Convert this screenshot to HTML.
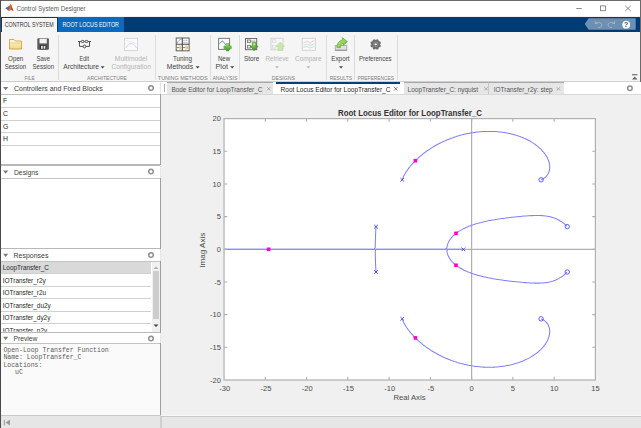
<!DOCTYPE html>
<html><head><meta charset="utf-8">
<style>
html,body{margin:0;padding:0;}
body{width:641px;height:428px;overflow:hidden;position:relative;background:#f0f0f0;font-family:"Liberation Sans",sans-serif;}
.abs{position:absolute;}
.t{position:absolute;white-space:nowrap;line-height:1;transform-origin:0 0;}
.b{position:absolute;box-sizing:border-box;}
</style></head><body>
<!-- window frame -->
<div class="b" style="left:0;top:0;width:641px;height:16px;background:#fff;"></div>
<div class="b" style="left:0;top:16.5px;width:641px;height:15.5px;background:#003c73;"></div>
<div class="b" style="left:2px;top:18px;width:55px;height:14px;background:#f5f5f5;border:1px solid #fff;border-bottom:none;"></div>
<div class="b" style="left:57.7px;top:17px;width:66px;height:14.6px;background:#0a6ac0;"></div>
<!-- toolstrip -->
<div class="b" style="left:0;top:32px;width:641px;height:49px;background:#f5f5f5;"></div>
<div class="b" style="left:0;top:81px;width:641px;height:1px;background:#cfcfcf;"></div>
<!-- separators -->
<div class="b" style="left:58px;top:35px;width:1px;height:45px;background:#dcdcdc;"></div>
<div class="b" style="left:155px;top:35px;width:1px;height:45px;background:#dcdcdc;"></div>
<div class="b" style="left:210px;top:35px;width:1px;height:45px;background:#dcdcdc;"></div>
<div class="b" style="left:239px;top:35px;width:1px;height:45px;background:#dcdcdc;"></div>
<div class="b" style="left:326px;top:35px;width:1px;height:45px;background:#dcdcdc;"></div>
<div class="b" style="left:354px;top:35px;width:1px;height:45px;background:#dcdcdc;"></div>
<div class="b" style="left:397px;top:35px;width:1px;height:45px;background:#dcdcdc;"></div>

<!-- left panel -->
<div class="b" style="left:0;top:82px;width:161px;height:333px;background:#fff;"></div>
<!-- panel 1 header -->
<div class="b" style="left:1px;top:82px;width:159px;height:12px;background:#fff;"></div>
<div class="b" style="left:1px;top:94px;width:159px;height:1px;background:#c4c4c4;"></div>
<div class="b" style="left:1px;top:107px;width:159px;height:1px;background:#d0d0d0;"></div>
<div class="b" style="left:1px;top:119.5px;width:159px;height:1px;background:#d0d0d0;"></div>
<div class="b" style="left:1px;top:132px;width:159px;height:1px;background:#d0d0d0;"></div>
<div class="b" style="left:1px;top:144.5px;width:159px;height:1px;background:#d0d0d0;"></div>
<div class="b" style="left:1px;top:164px;width:159px;height:1.5px;background:#b8b8b8;"></div>
<!-- designs -->
<div class="b" style="left:1px;top:165.5px;width:159px;height:12px;background:#fff;"></div>
<div class="b" style="left:1px;top:177.5px;width:159px;height:1px;background:#c4c4c4;"></div>
<div class="b" style="left:1px;top:248px;width:159px;height:1px;background:#b8b8b8;"></div>
<!-- responses -->
<div class="b" style="left:1px;top:249px;width:159px;height:12px;background:#fff;"></div>
<div class="b" style="left:1px;top:260.5px;width:159px;height:1px;background:#c4c4c4;"></div>
<div class="b" style="left:1px;top:261.5px;width:150px;height:11px;background:#d9d9d9;"></div>
<div class="b" style="left:1px;top:272.5px;width:150px;height:1px;background:#cfcfcf;"></div>
<div class="b" style="left:1px;top:285.5px;width:150px;height:1px;background:#d0d0d0;"></div>
<div class="b" style="left:1px;top:298px;width:150px;height:1px;background:#d0d0d0;"></div>
<div class="b" style="left:1px;top:310.5px;width:150px;height:1px;background:#d0d0d0;"></div>
<div class="b" style="left:1px;top:323px;width:150px;height:1px;background:#d0d0d0;"></div>
<!-- scrollbar -->
<div class="b" style="left:151.5px;top:261.5px;width:8.5px;height:70.5px;background:#f0f0f0;"></div>
<div class="b" style="left:152.5px;top:270.5px;width:6px;height:48px;background:#cdcdcd;"></div>
<svg class="abs" style="left:151px;top:262px" width="10" height="70">
<path d="M2.5 7 L5 4.5 L7.5 7 Z" fill="#b0b0b0"/>
<path d="M2.5 62.5 L5 65 L7.5 62.5 Z" fill="#404040"/>
</svg>
<!-- preview -->
<div class="b" style="left:1px;top:332px;width:159px;height:1px;background:#b8b8b8;"></div>
<div class="b" style="left:1px;top:333px;width:159px;height:10px;background:#fff;"></div>
<div class="b" style="left:1px;top:343px;width:159px;height:1px;background:#c4c4c4;"></div>
<div class="b" style="left:1px;top:344px;width:159px;height:71px;background:#fafafa;"></div>
<!-- panel right border -->
<div class="b" style="left:160px;top:94px;width:1px;height:71px;background:#a0a0a0;"></div>
<div class="b" style="left:160px;top:177.5px;width:1px;height:71px;background:#a0a0a0;"></div>
<div class="b" style="left:160px;top:260.5px;width:1px;height:72px;background:#a0a0a0;"></div>
<div class="b" style="left:160px;top:343px;width:1px;height:72px;background:#a0a0a0;"></div>
<div class="b" style="left:160px;top:82px;width:1.5px;height:12px;background:#e6e6e6;"></div>
<div class="b" style="left:160px;top:165.5px;width:1.5px;height:12px;background:#e6e6e6;"></div>
<div class="b" style="left:160px;top:249px;width:1.5px;height:11.5px;background:#e6e6e6;"></div>
<div class="b" style="left:160px;top:333px;width:1.5px;height:10px;background:#e6e6e6;"></div>
<!-- panel header triangles + gear -->
<svg class="abs" style="left:0;top:0" width="161" height="428">
<g fill="#7a7a7a">
<path d="M3.1 87 H8.2 L5.65 90.2 Z"/>
<path d="M3.1 170.5 H8.2 L5.65 173.7 Z"/>
<path d="M3.1 253.8 H8.2 L5.65 257 Z"/>
<path d="M3.1 336.8 H8.2 L5.65 340 Z"/>
</g>
<g fill="none" stroke="#8f8f8f" stroke-width="1.5">
<circle cx="151" cy="88" r="2.25"/>
<circle cx="151" cy="171.5" r="2.25"/>
<circle cx="151" cy="255" r="2.25"/>
<circle cx="151" cy="338.5" r="2.25"/>
</g>
</svg>

<!-- document area -->
<div class="b" style="left:161px;top:82px;width:480px;height:12px;background:#fff;"></div>
<div class="b" style="left:161px;top:94px;width:480px;height:321px;background:#f0f0f0;"></div>
<div class="b" style="left:161px;top:93.5px;width:480px;height:1px;background:#d8d8d8;"></div>
<!-- grip -->
<div class="b" style="left:163.5px;top:84px;width:1px;height:8px;background:#b0b0b0;"></div>
<!-- tabs -->
<div class="b" style="left:166.5px;top:82px;width:106.5px;height:12px;background:#e6e6e6;border-top:1px solid #a8a8a8;"></div>
<div class="b" style="left:276px;top:82px;width:124px;height:12px;background:#fff;border-top:2px solid #0a3e76;"></div>
<div class="b" style="left:403.5px;top:82px;width:85px;height:12px;background:#e6e6e6;border-top:1px solid #a8a8a8;border-right:1px solid #c8c8c8;"></div>
<div class="b" style="left:488.5px;top:82px;width:75px;height:12px;background:#e6e6e6;border-top:1px solid #a8a8a8;"></div>
<svg class="abs" style="left:0;top:80px" width="641" height="16">
<g stroke="#9a9a9a" stroke-width="0.8">
<path d="M267.2 7.2 l3.2 3.2 M267.2 10.4 l3.2 -3.2"/>
<path d="M484.4 7.2 l3.2 3.2 M484.4 10.4 l3.2 -3.2"/>
<path d="M556.8 7.2 l3.2 3.2 M556.8 10.4 l3.2 -3.2"/>
</g>
<g stroke="#555" stroke-width="0.8">
<path d="M394.2 7.2 l3.2 3.2 M394.2 10.4 l3.2 -3.2"/>
</g>
<circle cx="629.9" cy="8.2" r="2.25" fill="none" stroke="#8f8f8f" stroke-width="1.5"/>
</svg>

<!-- status bar -->
<div class="b" style="left:0;top:415px;width:641px;height:13px;background:#e6e6e6;border-top:1px solid #c8c8c8;"></div>
<div class="b" style="left:161px;top:415px;width:480px;height:1px;background:#f7f7f7;"></div>
<div class="b" style="left:161px;top:416px;width:480px;height:1px;background:#c8c8c8;"></div>
<div class="b" style="left:160px;top:416px;width:1.5px;height:12px;background:#cfcfcf;"></div>
<svg class="abs" style="left:0;top:415px" width="20" height="13">
<path d="M4.3 4.8 V10.5" stroke="#9a9a9a" stroke-width="1"/>
<path d="M10 4.8 L5.5 7.6 L10 10.5 Z" fill="#9a9a9a"/>
</svg>

<!-- frame lines -->
<div class="b" style="left:0;top:0;width:641px;height:1px;background:#6a6a6a;"></div>
<div class="b" style="left:0;top:0;width:1px;height:428px;background:#4a4a4a;"></div>
<div class="b" style="left:640px;top:0;width:1px;height:82px;background:#6a6a6a;"></div>

<!-- window controls -->
<svg class="abs" style="left:0;top:0" width="641" height="16">
<path d="M576.2 8.5 H581.8" stroke="#707070" stroke-width="0.8"/>
<rect x="600.6" y="5.9" width="5" height="4.8" fill="none" stroke="#707070" stroke-width="0.8"/>
<path d="M625.2 5.8 L630.8 11 M625.2 11 L630.8 5.8" stroke="#707070" stroke-width="0.8"/>
<!-- matlab logo -->
<path d="M5.5 8.2 L8.6 6.2 L10.8 3.9 L13.4 10.9 L11.2 9.6 L9 11.2 Z" fill="#e8662a"/>
<path d="M5.5 8.2 L8.6 6.2 L9.6 8.2 L7.6 9.7 Z" fill="#3b6fb6"/>
<path d="M10.8 3.9 L13.4 10.9 L11.6 9.8 Z" fill="#a8351a"/>
</svg>

<!-- QAT -->
<svg class="abs" style="left:580px;top:16px" width="61" height="16">
<path d="M4.8 8 L8.6 2.3 H55.7 V13.7 H8.6 Z" fill="#6c8fb3"/>
<g fill="none" stroke="#a3b8cf" stroke-width="0.9">
<path d="M15.2 5.2 V7.6 H17.6"/><path d="M15.4 7.4 C17 5.9 21.8 5.9 21.8 8.9 C21.8 11 19.6 11.9 17.8 11.4"/>
<path d="M34.6 5.2 V7.6 H32.2"/><path d="M34.4 7.4 C32.8 5.9 28 5.9 28 8.9 C28 11 30.2 11.9 32 11.4"/>
</g>
<circle cx="46.2" cy="8.7" r="3.9" fill="#fff"/>
<text x="46.2" y="11.2" font-family="Liberation Sans" font-weight="700" font-size="6.8" text-anchor="middle" fill="#2a4a70">?</text>
</svg>

<!-- toolstrip icons -->
<svg class="abs" style="left:0;top:0" width="641" height="82">
<defs>
<linearGradient id="fold" x1="0" y1="0" x2="0" y2="1"><stop offset="0" stop-color="#fffbe6"/><stop offset="1" stop-color="#f3d67a"/></linearGradient>
<linearGradient id="grn2" x1="0" y1="0" x2="1" y2="1"><stop offset="0" stop-color="#c4ee88"/><stop offset="0.6" stop-color="#8fd04e"/><stop offset="1" stop-color="#4c9c2a"/></linearGradient>
<linearGradient id="grn" x1="0" y1="0" x2="0" y2="1"><stop offset="0" stop-color="#a6dd6a"/><stop offset="1" stop-color="#2f9a1e"/></linearGradient>
</defs>
<!-- folder -->
<path d="M9.5 39.5 H14 L15.5 41 H21.5 V49 H9.5 Z" fill="url(#fold)" stroke="#d0a24a" stroke-width="0.9"/>
<path d="M10 43 H21.5" stroke="#e8c772" stroke-width="0.8"/>
<!-- floppy -->
<rect x="37.3" y="38.3" width="11.6" height="11.4" rx="0.8" fill="#5a5a5a"/>
<rect x="39.5" y="38.8" width="7.3" height="4.6" fill="#f4f4f4"/>
<rect x="39.8" y="45" width="6.6" height="4.4" fill="#2e2e2e"/>
<rect x="41" y="45.8" width="1.8" height="3" fill="#e0e0e0"/><rect x="43.6" y="45.8" width="1.8" height="3" fill="#e0e0e0"/>
<!-- edit architecture -->
<g stroke="#505050" stroke-width="1" fill="none">
<path d="M78 41.5 H91"/>
<path d="M79.5 41.5 V46.4 H89.5 V41.5"/>
<ellipse cx="82.7" cy="41.5" rx="1.5" ry="1.1" fill="#f5f5f5"/>
<ellipse cx="86.5" cy="41.5" rx="1.5" ry="1.1" fill="#f5f5f5"/>
<circle cx="84.5" cy="46.5" r="1.4" fill="#f5f5f5"/>
</g>
<!-- multimodel (disabled) -->
<rect x="124.5" y="38.3" width="13" height="12.2" fill="#fafafa" stroke="#d6d6d6" stroke-width="1"/>
<path d="M126 48 C129 42 133 42 136.5 48" stroke="#c7d6ea" stroke-width="0.9" fill="none"/>
<path d="M126 40 L136.5 44" stroke="#dde6f0" stroke-width="0.7" fill="none"/>
<!-- tuning methods -->
<rect x="176.2" y="38" width="12.9" height="12.8" fill="#fdfdfd" stroke="#5c5c5c" stroke-width="1"/>
<path d="M182.3 38 V50.8 M176.2 44.3 H189.1" stroke="#4a4a4a" stroke-width="1.1"/>
<path d="M177.2 43.4 C178 40.8 179.8 39.4 181.7 39.2" stroke="#7d9cbf" stroke-width="0.9" fill="none"/>
<path d="M183.3 40.3 H188.3 M183.3 42.6 H188.3" stroke="#9fb8d3" stroke-width="1" stroke-dasharray="1.6 0.6"/>
<path d="M179.3 45 L182 47.6 L179.3 50.3 Z" fill="#e4c15a"/>
<path d="M185.6 45 L188.8 47.6 L185.6 50.3 Z" fill="#e2bd52"/>
<path d="M180 45.2 V50.2 M186.3 45.2 V50.2" stroke="#efd88f" stroke-width="0.8"/>
<path d="M177 47.6 H179.2 M183 47.6 H185.3" stroke="#5a86c0" stroke-width="1"/>
<!-- new plot -->
<rect x="218.6" y="38.4" width="11" height="11" fill="#fcfcfc" stroke="#7a7a7a" stroke-width="1"/>
<path d="M219.3 43.6 L222.6 40.9 L226 45" stroke="#6f93bd" stroke-width="1" fill="none"/>
<path d="M226.25 43.599999999999994 H228.95 V45.949999999999996 H231.29999999999998 V48.65 H228.95 V51.0 H226.25 V48.65 H223.9 V45.949999999999996 H226.25 Z" fill="url(#grn)" stroke="#57a232" stroke-width="0.5"/>
<!-- store -->
<rect x="245.5" y="38.5" width="11.2" height="11.2" fill="#f4f4f4" stroke="#6e6e6e" stroke-width="1"/>
<rect x="247.4" y="40" width="3.2" height="2.4" fill="none" stroke="#6a6a6a" stroke-width="0.8"/>
<rect x="247.4" y="45.6" width="3.2" height="2.4" fill="none" stroke="#6a6a6a" stroke-width="0.8"/>
<path d="M250.6 41.2 H255.5" stroke="#8a8a8a" stroke-width="0.7"/>
<path d="M252.3 42.6 H256 V46.2 H258 L254.15 50.6 L250.3 46.2 H252.3 Z" fill="url(#grn)" stroke="#2f7f1f" stroke-width="0.6"/>
<ellipse cx="254.1" cy="44.2" rx="1.2" ry="1" fill="#c9f0a0" opacity="0.8"/>
<!-- retrieve (disabled) -->
<rect x="271" y="38.3" width="12" height="11.5" fill="#f7f7f7" stroke="#cfcfcf" stroke-width="0.9"/>
<rect x="272.5" y="39.8" width="3.4" height="2.6" fill="none" stroke="#d6d6d6" stroke-width="0.7"/>
<rect x="272.5" y="45.5" width="3.4" height="2.6" fill="none" stroke="#d6d6d6" stroke-width="0.7"/>
<path d="M278 50.5 V46.5 H276 L280.2 42 L284.5 46.5 H282.5 V50.5 Z" fill="#c8e8b0" stroke="#b6d9a0" stroke-width="0.6"/>
<!-- compare (disabled) -->
<rect x="302.3" y="38.3" width="13" height="12" fill="#f9f9f9" stroke="#d2d2d2" stroke-width="1"/>
<path d="M303.5 43 L307 41 L310 43 L314 40.5" stroke="#f0b8b8" stroke-width="0.8" fill="none"/>
<path d="M303.5 45.5 L307 44 L310 45.5 L314 44" stroke="#c2dcb2" stroke-width="0.8" fill="none"/>
<path d="M303.5 47.5 L307 46.5 L310 48 L314 46.5" stroke="#bcd0ea" stroke-width="0.8" fill="none"/>
<!-- export -->
<rect x="335.2" y="45.6" width="11.6" height="4.7" fill="#e2e2e2" stroke="#a2a2a2" stroke-width="0.8"/>
<path d="M335.2 50.2 H346.8" stroke="#8a8a8a" stroke-width="0.9"/>
<path d="M336.9 47.6 C337.1 43.4 338.9 40.7 342.4 40.1 L342.2 37.5 L347.4 41.6 L343.2 45.4 L342.9 43.1 C341.4 43.5 340.6 45 340.6 47.6 Z" fill="url(#grn2)" stroke="#4f9d2d" stroke-width="0.6"/>
<!-- gear -->
<g transform="translate(375.7 44.3)" fill="#6e6e6e">
<circle cx="3.60" cy="1.49" r="1.55"/><circle cx="1.49" cy="3.60" r="1.55"/><circle cx="-1.49" cy="3.60" r="1.55"/><circle cx="-3.60" cy="1.49" r="1.55"/><circle cx="-3.60" cy="-1.49" r="1.55"/><circle cx="-1.49" cy="-3.60" r="1.55"/><circle cx="1.49" cy="-3.60" r="1.55"/><circle cx="3.60" cy="-1.49" r="1.55"/>
<circle r="4.2"/>
<circle r="2.7" fill="#8c8c8c"/><circle r="1.7" fill="#5e5e5e"/><circle r="1.15" fill="#f7f7f7"/>
</g>
<!-- dropdown arrows -->
<g fill="#444">
<path d="M100.6 66.2 H104.6 L102.6 68.4 Z"/>
<path d="M195.6 66.2 H199.6 L197.6 68.4 Z"/>
<path d="M230.2 66.2 H234.2 L232.2 68.4 Z"/>
<path d="M339 66.2 H343 L341 68.4 Z"/>
</g>
<g fill="#b8b8b8">
<path d="M275 66.2 H279 L277 68.4 Z"/>
<path d="M306.3 66.2 H310.3 L308.3 68.4 Z"/>
</g>
<!-- collapse -->
<rect x="632" y="74.2" width="5.5" height="1.1" fill="#666"/>
<path d="M632 79.6 L634.75 76.5 L637.5 79.6 Z" fill="#666"/>
</svg>

<svg class="abs" style="left:0;top:0" width="641" height="428" viewBox="0 0 641 428">
<defs><clipPath id="ax"><rect x="224.05" y="118.6" width="371.34" height="261.40"/></clipPath></defs>
<rect x="224.05" y="118.6" width="371.34" height="261.40" fill="#fff"/>
<g clip-path="url(#ax)">
<path d="M471.61 118.6 V380.6 M224.05 249.30 H596.05" stroke="#b0b0b0" stroke-width="1.2" fill="none"/>
<g fill="none" stroke="#8080ff" stroke-width="1.05" stroke-linejoin="round">
<path d="M402.2 179.8 L402.5 178.9 L402.9 178.0 L403.3 177.0 L403.7 176.1 L404.2 175.2 L404.7 174.3 L405.2 173.5 L405.7 172.6 L406.2 171.8 L406.8 170.9 L407.4 170.1 L408.0 169.2 L408.6 168.4 L409.2 167.6 L409.9 166.8 L410.5 166.0 L411.2 165.2 L411.8 164.5 L412.5 163.7 L413.2 163.0 L413.9 162.2 L414.6 161.5 L415.3 160.7 L416.1 160.0 L416.8 159.3 L417.6 158.6 L418.3 157.9 L419.1 157.2 L419.9 156.5 L420.7 155.9 L421.4 155.2 L422.3 154.6 L423.0 153.9 L423.8 153.3 L424.7 152.7 L425.5 152.0 L426.3 151.4 L427.2 150.8 L428.0 150.3 L428.9 149.7 L429.8 149.1 L430.6 148.5 L431.5 147.9 L432.4 147.4 L433.3 146.8 L434.2 146.3 L435.1 145.8 L436.0 145.3 L436.9 144.8 L437.8 144.3 L438.7 143.8 L439.7 143.3 L440.7 142.8 L441.6 142.4 L442.5 141.9 L443.4 141.5 L444.4 141.1 L445.3 140.6 L446.3 140.2 L447.3 139.8 L448.3 139.4 L449.3 139.0 L450.3 138.6 L451.2 138.2 L452.2 137.9 L453.2 137.5 L454.1 137.2 L455.1 136.9 L456.1 136.6 L457.1 136.2 L458.1 135.9 L459.2 135.6 L460.2 135.3 L461.3 135.0 L462.3 134.8 L463.4 134.5 L464.5 134.2 L465.4 134.0 L466.4 133.8 L467.4 133.6 L468.4 133.4 L469.4 133.2 L470.4 133.0 L471.5 132.8 L472.5 132.7 L473.5 132.5 L474.5 132.4 L475.6 132.2 L476.6 132.1 L477.7 132.0 L478.7 131.9 L479.8 131.8 L480.9 131.7 L481.9 131.6 L483.0 131.5 L484.1 131.5 L485.2 131.4 L486.3 131.4 L487.3 131.4 L488.4 131.4 L489.5 131.4 L490.6 131.4 L491.7 131.4 L492.8 131.4 L493.9 131.5 L495.0 131.5 L496.1 131.6 L497.2 131.7 L498.3 131.8 L499.3 131.9 L500.4 132.0 L501.5 132.1 L502.6 132.3 L503.7 132.4 L504.8 132.6 L505.8 132.8 L506.9 133.0 L508.0 133.2 L509.0 133.4 L510.1 133.6 L511.1 133.9 L512.1 134.1 L513.2 134.4 L514.2 134.7 L515.2 135.0 L516.2 135.3 L517.2 135.6 L518.2 135.9 L519.2 136.3 L520.2 136.6 L521.1 137.0 L522.1 137.3 L523.0 137.7 L523.9 138.1 L524.9 138.6 L525.9 139.0 L526.9 139.5 L527.9 140.0 L528.8 140.5 L529.8 141.0 L530.7 141.5 L531.6 142.1 L532.4 142.6 L533.3 143.1 L534.1 143.7 L535.0 144.3 L535.9 145.0 L536.8 145.6 L537.6 146.3 L538.4 146.9 L539.1 147.6 L539.9 148.3 L540.7 149.0 L541.4 149.7 L542.1 150.5 L542.8 151.3 L543.5 152.0 L544.1 152.9 L544.8 153.7 L545.3 154.5 L545.9 155.4 L546.5 156.3 L547.0 157.2 L547.5 158.1 L547.9 159.1 L548.3 160.0 L548.7 161.0 L549.0 162.0 L549.2 163.0 L549.5 163.9 L549.6 165.0 L549.7 166.0 L549.8 167.0 L549.7 168.0 L549.6 169.0 L549.5 170.0 L549.2 171.0 L548.9 172.0 L548.5 172.9 L548.1 173.8 L547.5 174.7 L546.9 175.5 L546.3 176.3 L545.6 177.0 L544.8 177.7 L544.0 178.3 L543.1 178.8 L542.2 179.3 L541.3 179.7 L541.2 179.8"/>
<path d="M402.2 318.8 L402.5 319.7 L402.9 320.6 L403.3 321.6 L403.7 322.5 L404.2 323.4 L404.7 324.3 L405.2 325.1 L405.7 326.0 L406.2 326.8 L406.8 327.7 L407.4 328.5 L408.0 329.4 L408.6 330.2 L409.2 331.0 L409.9 331.8 L410.5 332.6 L411.2 333.4 L411.8 334.1 L412.5 334.9 L413.2 335.6 L413.9 336.4 L414.6 337.1 L415.3 337.9 L416.1 338.6 L416.8 339.3 L417.6 340.0 L418.3 340.7 L419.1 341.4 L419.9 342.1 L420.7 342.7 L421.4 343.4 L422.3 344.0 L423.0 344.7 L423.8 345.3 L424.7 345.9 L425.5 346.6 L426.3 347.2 L427.2 347.8 L428.0 348.3 L428.9 348.9 L429.8 349.5 L430.6 350.1 L431.5 350.7 L432.4 351.2 L433.3 351.8 L434.2 352.3 L435.1 352.8 L436.0 353.3 L436.9 353.8 L437.8 354.3 L438.7 354.8 L439.7 355.3 L440.7 355.8 L441.6 356.2 L442.5 356.7 L443.4 357.1 L444.4 357.5 L445.3 358.0 L446.3 358.4 L447.3 358.8 L448.3 359.2 L449.3 359.6 L450.3 360.0 L451.2 360.4 L452.2 360.7 L453.2 361.1 L454.1 361.4 L455.1 361.7 L456.1 362.0 L457.1 362.4 L458.1 362.7 L459.2 363.0 L460.2 363.3 L461.3 363.6 L462.3 363.8 L463.4 364.1 L464.5 364.4 L465.4 364.6 L466.4 364.8 L467.4 365.0 L468.4 365.2 L469.4 365.4 L470.4 365.6 L471.5 365.8 L472.5 365.9 L473.5 366.1 L474.5 366.2 L475.6 366.4 L476.6 366.5 L477.7 366.6 L478.7 366.7 L479.8 366.8 L480.9 366.9 L481.9 367.0 L483.0 367.1 L484.1 367.1 L485.2 367.2 L486.3 367.2 L487.3 367.2 L488.4 367.2 L489.5 367.2 L490.6 367.2 L491.7 367.2 L492.8 367.2 L493.9 367.1 L495.0 367.1 L496.1 367.0 L497.2 366.9 L498.3 366.8 L499.3 366.7 L500.4 366.6 L501.5 366.5 L502.6 366.3 L503.7 366.2 L504.8 366.0 L505.8 365.8 L506.9 365.6 L508.0 365.4 L509.0 365.2 L510.1 365.0 L511.1 364.7 L512.1 364.5 L513.2 364.2 L514.2 363.9 L515.2 363.6 L516.2 363.3 L517.2 363.0 L518.2 362.7 L519.2 362.3 L520.2 362.0 L521.1 361.6 L522.1 361.3 L523.0 360.9 L523.9 360.5 L524.9 360.0 L525.9 359.6 L526.9 359.1 L527.9 358.6 L528.8 358.1 L529.8 357.6 L530.7 357.1 L531.6 356.5 L532.4 356.0 L533.3 355.5 L534.1 354.9 L535.0 354.3 L535.9 353.6 L536.8 353.0 L537.6 352.3 L538.4 351.7 L539.1 351.0 L539.9 350.3 L540.7 349.6 L541.4 348.9 L542.1 348.1 L542.8 347.3 L543.5 346.6 L544.1 345.7 L544.8 344.9 L545.3 344.1 L545.9 343.2 L546.5 342.3 L547.0 341.4 L547.5 340.5 L547.9 339.5 L548.3 338.6 L548.7 337.6 L549.0 336.6 L549.2 335.6 L549.5 334.7 L549.6 333.6 L549.7 332.6 L549.8 331.6 L549.7 330.6 L549.6 329.6 L549.5 328.6 L549.2 327.6 L548.9 326.6 L548.5 325.7 L548.1 324.8 L547.5 323.9 L546.9 323.1 L546.3 322.3 L545.6 321.6 L544.8 320.9 L544.0 320.3 L543.1 319.8 L542.2 319.3 L541.3 318.9 L541.2 318.8"/>
<path d="M376.0 226.6 L376.0 227.6 L375.9 228.6 L375.8 229.6 L375.8 230.6 L375.7 231.6 L375.7 232.7 L375.6 233.7 L375.6 234.7 L375.5 235.7 L375.5 236.7 L375.5 237.7 L375.4 238.8 L375.4 239.8 L375.4 240.9 L375.3 241.9 L375.3 243.1 L375.3 244.1 L375.3 245.3 L375.3 246.3 L375.2 247.5 L374.4 249.3 L373.3 249.3 L372.1 249.3 L370.9 249.3 L369.6 249.3 L368.6 249.3 L367.5 249.3 L366.3 249.3 L365.3 249.3 L364.1 249.3 L363.0 249.3 L362.0 249.3 L361.0 249.3 L359.9 249.3 L358.9 249.3 L357.8 249.3 L356.7 249.3 L355.7 249.3 L354.7 249.3 L353.7 249.3 L352.6 249.3 L351.5 249.3 L350.4 249.3 L349.4 249.3 L348.3 249.3 L347.2 249.3 L346.2 249.3 L345.1 249.3 L344.1 249.3 L343.0 249.3 L341.9 249.3 L340.9 249.3 L339.8 249.3 L338.7 249.3 L337.7 249.3 L336.6 249.3 L335.5 249.3 L334.4 249.3 L333.3 249.3 L332.3 249.3 L331.3 249.3 L330.2 249.3 L329.2 249.3 L328.2 249.3 L327.1 249.3 L326.1 249.3 L325.0 249.3 L323.9 249.3 L322.8 249.3 L321.7 249.3 L320.6 249.3 L319.5 249.3 L318.5 249.3 L317.5 249.3 L316.5 249.3 L315.4 249.3 L314.4 249.3 L313.3 249.3 L312.3 249.3 L311.2 249.3 L310.1 249.3 L309.0 249.3 L307.9 249.3 L306.8 249.3 L305.7 249.3 L304.5 249.3 L303.5 249.3 L302.5 249.3 L301.5 249.3 L300.5 249.3 L299.4 249.3 L298.4 249.3 L297.3 249.3 L296.2 249.3 L295.1 249.3 L294.0 249.3 L292.9 249.3 L291.8 249.3 L290.7 249.3 L289.5 249.3 L288.4 249.3 L287.2 249.3 L286.2 249.3 L285.2 249.3 L284.2 249.3 L283.1 249.3 L282.1 249.3 L281.0 249.3 L280.0 249.3 L278.9 249.3 L277.8 249.3 L276.7 249.3 L275.6 249.3 L274.5 249.3 L273.4 249.3 L272.3 249.3 L271.1 249.3 L270.0 249.3 L268.8 249.3 L267.6 249.3 L266.5 249.3 L265.3 249.3 L264.3 249.3 L263.3 249.3 L262.2 249.3 L261.2 249.3 L260.2 249.3 L259.1 249.3 L258.1 249.3 L257.0 249.3 L255.9 249.3 L254.9 249.3 L253.8 249.3 L252.7 249.3 L251.6 249.3 L250.5 249.3 L249.3 249.3 L248.2 249.3 L247.1 249.3 L245.9 249.3 L244.7 249.3 L243.6 249.3 L242.4 249.3 L241.2 249.3 L240.0 249.3 L238.8 249.3 L237.6 249.3 L236.3 249.3 L235.1 249.3 L234.1 249.3 L233.1 249.3 L232.1 249.3 L231.0 249.3 L230.0 249.3 L229.0 249.3 L227.9 249.3 L226.9 249.3 L225.8 249.3 L224.7 249.3 L223.7 249.3 L222.6 249.3 L221.5 249.3 L220.4 249.3 L219.3 249.3 L218.2 249.3 L217.1 249.3 L215.9 249.3 L214.8 249.3 L213.7 249.3 L212.5 249.3 L211.3 249.3 L210.2 249.3 L209.0 249.3 L207.8 249.3 L206.6 249.3 L205.4 249.3 L204.2 249.3 L203.0 249.3 L201.7 249.3 L200.5 249.3 L199.2 249.3 L198.0 249.3 L196.7 249.3 L195.4 249.3 L194.1 249.3 L192.8 249.3 L191.5 249.3 L190.2 249.3 L188.9 249.3 L187.9 249.3 L186.9 249.3 L185.8 249.3 L184.8 249.3 L183.8 249.3 L182.8 249.3 L181.7 249.3 L180.7 249.3 L179.6 249.3 L178.6 249.3 L177.5 249.3 L176.4 249.3 L175.4 249.3 L174.3 249.3 L173.2 249.3 L172.1 249.3 L171.0 249.3 L169.9 249.3 L168.8 249.3 L167.6 249.3 L166.5 249.3 L165.4 249.3 L164.2 249.3 L163.1 249.3 L161.9 249.3 L160.8 249.3 L159.6 249.3 L158.4 249.3 L157.2 249.3 L156.0 249.3 L154.8 249.3 L153.6 249.3 L152.4 249.3 L151.2 249.3 L150.0 249.3 L148.7 249.3 L147.5 249.3 L146.2 249.3 L145.0 249.3 L143.7 249.3 L142.4 249.3 L141.1 249.3 L139.8 249.3 L138.5 249.3 L137.2 249.3 L135.9 249.3 L134.6 249.3 L133.2 249.3 L131.9 249.3 L130.6 249.3 L129.2 249.3 L127.8 249.3 L126.4 249.3 L125.1 249.3 L123.7 249.3 L122.3 249.3 L120.8 249.3 L119.4 249.3 L118.0 249.3 L116.5 249.3 L115.1 249.3 L113.6 249.3 L112.2 249.3 L110.7 249.3 L109.2 249.3 L107.7 249.3 L106.7 249.3 L105.7 249.3 L104.7 249.3 L103.6 249.3 L102.6 249.3 L101.6 249.3 L100.6 249.3 L99.5 249.3 L98.5 249.3 L97.4 249.3 L96.4 249.3 L95.3 249.3 L94.3 249.3 L93.2 249.3 L92.1 249.3 L91.1 249.3 L90.0 249.3 L88.9 249.3 L87.8 249.3 L86.7 249.3 L85.6 249.3 L84.5 249.3 L83.4 249.3 L82.3 249.3 L81.1 249.3 L80.0 249.3 L78.9 249.3 L77.8 249.3 L76.6 249.3 L75.5 249.3 L74.3 249.3 L73.2 249.3 L72.0 249.3 L70.8 249.3 L69.7 249.3 L68.5 249.3 L67.3 249.3 L66.1 249.3 L64.9 249.3 L63.7 249.3 L62.5 249.3 L61.3 249.3 L60.1 249.3 L58.8 249.3 L57.6 249.3 L56.4 249.3 L55.1 249.3 L53.9 249.3 L52.6 249.3 L51.4 249.3 L50.1 249.3 L48.8 249.3 L47.6 249.3 L46.3 249.3 L45.0 249.3 L43.7 249.3 L42.4 249.3 L41.1 249.3 L39.8 249.3 L38.5 249.3 L37.1 249.3 L35.8 249.3 L34.5 249.3 L33.1 249.3 L31.8 249.3 L30.4 249.3 L29.0 249.3 L27.7 249.3 L26.3 249.3 L24.9 249.3 L23.5 249.3 L22.1 249.3 L20.7 249.3 L19.3 249.3 L17.9 249.3 L16.4 249.3 L15.0 249.3 L13.6 249.3 L12.1 249.3 L10.7 249.3 L9.2 249.3 L7.7 249.3 L6.2 249.3 L4.8 249.3 L3.3 249.3 L1.8 249.3 L0.3 249.3 L-1.3 249.3 L-2.8 249.3 L-4.3 249.3 L-5.8 249.3 L-7.4 249.3 L-8.9 249.3 L-10.5 249.3 L-12.1 249.3 L-13.7 249.3 L-15.2 249.3 L-16.8 249.3 L-18.4 249.3 L-20.0 249.3 L-21.7 249.3 L-23.3 249.3 L-24.9 249.3 L-26.6 249.3 L-28.2 249.3 L-29.9 249.3 L-31.5 249.3 L-33.2 249.3 L-34.9 249.3 L-36.6 249.3 L-38.3 249.3 L-40.0 249.3 L-41.7 249.3 L-43.5 249.3 L-45.2 249.3 L-47.0 249.3 L-48.7 249.3 L-50.5 249.3 L-52.3 249.3 L-54.0 249.3 L-55.8 249.3 L-57.6 249.3 L-59.5 249.3 L-61.3 249.3 L-63.1 249.3 L-65.0 249.3 L-66.8 249.3 L-68.7 249.3 L-70.5 249.3 L-72.4 249.3 L-74.3 249.3 L-76.2 249.3 L-78.1 249.3 L-80.1 249.3 L-82.0 249.3 L-83.9 249.3 L-85.9 249.3 L-87.9 249.3 L-89.8 249.3 L-91.8 249.3 L-93.8 249.3 L-94.8 249.3 L-95.8 249.3 L-96.8 249.3 L-97.8 249.3 L-98.8 249.3 L-99.9 249.3 L-100.9 249.3 L-101.9 249.3 L-102.9 249.3 L-104.0 249.3 L-105.0 249.3 L-106.0 249.3 L-107.1 249.3 L-108.1 249.3 L-109.1 249.3 L-110.2 249.3 L-111.2 249.3 L-112.3 249.3 L-113.3 249.3 L-114.4 249.3 L-115.4 249.3 L-116.5 249.3 L-117.6 249.3 L-118.6 249.3 L-119.7 249.3 L-120.8 249.3 L-121.8 249.3 L-122.9 249.3 L-124.0 249.3 L-125.1 249.3 L-126.2 249.3 L-127.3 249.3 L-128.4 249.3 L-129.5 249.3 L-130.6 249.3 L-131.7 249.3 L-132.8 249.3 L-133.9 249.3 L-135.0 249.3 L-136.1 249.3 L-137.2 249.3 L-138.3 249.3 L-139.5 249.3 L-140.6 249.3 L-141.7 249.3 L-142.9 249.3 L-144.0 249.3 L-145.1 249.3 L-146.3 249.3 L-147.4 249.3 L-148.6 249.3 L-149.7 249.3 L-150.9 249.3 L-152.1 249.3 L-153.2 249.3 L-154.4 249.3 L-155.5 249.3 L-156.7 249.3 L-157.9 249.3 L-159.1 249.3 L-160.3 249.3 L-161.4 249.3 L-162.6 249.3 L-163.8 249.3 L-165.0 249.3 L-166.2 249.3 L-167.4 249.3 L-168.6 249.3 L-169.8 249.3 L-171.1 249.3 L-172.3 249.3 L-173.5 249.3 L-174.7 249.3 L-175.9 249.3 L-177.2 249.3 L-178.4 249.3 L-179.6 249.3 L-180.9 249.3 L-182.1 249.3 L-183.4 249.3 L-184.6 249.3 L-185.9 249.3 L-187.1 249.3 L-188.4 249.3 L-189.7 249.3 L-190.9 249.3 L-192.2 249.3 L-193.5 249.3 L-194.8 249.3 L-196.1 249.3 L-197.3 249.3 L-198.6 249.3 L-199.9 249.3"/>
<path d="M376.0 272.0 L376.0 271.0 L375.9 270.0 L375.8 269.0 L375.8 268.0 L375.7 267.0 L375.7 265.9 L375.6 264.9 L375.6 263.9 L375.5 262.9 L375.5 261.9 L375.5 260.9 L375.4 259.8 L375.4 258.8 L375.4 257.7 L375.3 256.7 L375.3 255.5 L375.3 254.5 L375.3 253.3 L375.3 252.3 L375.2 251.1 L376.1 249.3 L377.2 249.3 L378.4 249.3 L379.6 249.3 L380.8 249.3 L381.8 249.3 L382.9 249.3 L384.0 249.3 L385.0 249.3 L386.1 249.3 L387.2 249.3 L388.2 249.3 L389.3 249.3 L390.4 249.3 L391.4 249.3 L392.4 249.3 L393.5 249.3 L394.6 249.3 L395.6 249.3 L396.6 249.3 L397.7 249.3 L398.8 249.3 L399.9 249.3 L400.9 249.3 L402.0 249.3 L403.0 249.3 L404.0 249.3 L405.1 249.3 L406.1 249.3 L407.1 249.3 L408.2 249.3 L409.2 249.3 L410.3 249.3 L411.3 249.3 L412.3 249.3 L413.4 249.3 L414.5 249.3 L415.5 249.3 L416.6 249.3 L417.7 249.3 L418.7 249.3 L419.8 249.3 L420.8 249.3 L421.8 249.3 L422.9 249.3 L424.0 249.3 L425.1 249.3 L426.1 249.3 L427.1 249.3 L428.2 249.3 L429.3 249.3 L430.4 249.3 L431.5 249.3 L432.5 249.3 L433.6 249.3 L434.7 249.3 L435.7 249.3 L436.9 249.3 L437.9 249.3 L439.1 249.3 L440.1 249.3 L441.3 249.3 L442.3 249.3 L443.7 249.3 L445.2 249.3 L446.9 248.3 L447.0 247.1 L447.2 245.9 L447.5 244.9 L447.8 243.9 L448.2 242.9 L448.6 242.0 L449.1 241.1 L449.6 240.2 L450.2 239.4 L450.8 238.5 L451.4 237.7 L452.1 236.9 L452.8 236.2 L453.5 235.5 L454.3 234.8 L455.0 234.1 L455.8 233.5 L456.7 232.8 L457.5 232.2 L458.3 231.7 L459.2 231.1 L460.1 230.6 L461.0 230.1 L461.9 229.6 L462.8 229.1 L463.7 228.6 L464.6 228.2 L465.5 227.8 L466.4 227.3 L467.4 226.9 L468.3 226.5 L469.3 226.1 L470.3 225.8 L471.2 225.4 L472.2 225.1 L473.2 224.8 L474.2 224.4 L475.2 224.1 L476.2 223.8 L477.2 223.5 L478.1 223.2 L479.1 223.0 L480.1 222.7 L481.2 222.5 L482.2 222.2 L483.2 222.0 L484.2 221.7 L485.2 221.5 L486.2 221.3 L487.2 221.1 L488.3 220.8 L489.3 220.6 L490.3 220.5 L491.3 220.3 L492.3 220.1 L493.2 219.9 L494.2 219.7 L495.2 219.6 L496.2 219.4 L497.2 219.2 L498.2 219.1 L499.2 218.9 L500.3 218.8 L501.3 218.6 L502.3 218.5 L503.3 218.4 L504.3 218.2 L505.3 218.1 L506.4 217.9 L507.4 217.8 L508.4 217.7 L509.4 217.6 L510.5 217.4 L511.5 217.3 L512.5 217.2 L513.6 217.1 L514.6 217.0 L515.6 216.9 L516.6 216.8 L517.6 216.7 L518.6 216.6 L519.6 216.5 L520.6 216.4 L521.6 216.3 L522.7 216.2 L523.7 216.1 L524.7 216.0 L525.8 216.0 L526.8 215.9 L527.9 215.8 L528.9 215.8 L529.9 215.7 L530.9 215.6 L531.9 215.6 L532.9 215.6 L534.0 215.5 L535.0 215.5 L536.0 215.5 L537.1 215.5 L538.1 215.5 L539.2 215.5 L540.2 215.5 L541.2 215.6 L542.3 215.6 L543.3 215.7 L544.4 215.8 L545.4 215.9 L546.4 216.1 L547.4 216.2 L548.4 216.4 L549.5 216.6 L550.5 216.9 L551.4 217.1 L552.4 217.4 L553.4 217.7 L554.4 218.1 L555.3 218.4 L556.2 218.8 L557.2 219.3 L558.1 219.7 L559.0 220.2 L559.8 220.7 L560.7 221.2 L561.5 221.8 L562.4 222.3 L563.2 222.9 L564.0 223.6 L564.7 224.2 L565.5 224.9 L566.2 225.6 L566.9 226.3 L567.0 226.4"/>
<path d="M463.4 249.3 L462.4 249.3 L461.4 249.3 L460.3 249.3 L459.3 249.3 L458.3 249.3 L457.3 249.3 L456.3 249.3 L455.2 249.3 L454.2 249.3 L453.1 249.3 L452.0 249.3 L450.9 249.3 L449.7 249.3 L448.4 249.3 L446.9 250.3 L447.0 251.5 L447.2 252.7 L447.5 253.7 L447.8 254.7 L448.2 255.7 L448.6 256.6 L449.1 257.5 L449.6 258.4 L450.2 259.2 L450.8 260.1 L451.4 260.9 L452.1 261.7 L452.8 262.4 L453.5 263.1 L454.3 263.8 L455.0 264.5 L455.8 265.1 L456.7 265.8 L457.5 266.4 L458.3 266.9 L459.2 267.5 L460.1 268.0 L461.0 268.5 L461.9 269.0 L462.8 269.5 L463.7 270.0 L464.6 270.4 L465.5 270.8 L466.4 271.3 L467.4 271.7 L468.3 272.1 L469.3 272.5 L470.3 272.8 L471.2 273.2 L472.2 273.5 L473.2 273.8 L474.2 274.2 L475.2 274.5 L476.2 274.8 L477.2 275.1 L478.1 275.4 L479.1 275.6 L480.1 275.9 L481.2 276.1 L482.2 276.4 L483.2 276.6 L484.2 276.9 L485.2 277.1 L486.2 277.3 L487.2 277.5 L488.3 277.8 L489.3 278.0 L490.3 278.1 L491.3 278.3 L492.3 278.5 L493.2 278.7 L494.2 278.9 L495.2 279.0 L496.2 279.2 L497.2 279.4 L498.2 279.5 L499.2 279.7 L500.3 279.8 L501.3 280.0 L502.3 280.1 L503.3 280.2 L504.3 280.4 L505.3 280.5 L506.4 280.7 L507.4 280.8 L508.4 280.9 L509.4 281.0 L510.5 281.2 L511.5 281.3 L512.5 281.4 L513.6 281.5 L514.6 281.6 L515.6 281.7 L516.6 281.8 L517.6 281.9 L518.6 282.0 L519.6 282.1 L520.6 282.2 L521.6 282.3 L522.7 282.4 L523.7 282.5 L524.7 282.6 L525.8 282.6 L526.8 282.7 L527.9 282.8 L528.9 282.8 L529.9 282.9 L530.9 283.0 L531.9 283.0 L532.9 283.0 L534.0 283.1 L535.0 283.1 L536.0 283.1 L537.1 283.1 L538.1 283.1 L539.2 283.1 L540.2 283.1 L541.2 283.0 L542.3 283.0 L543.3 282.9 L544.4 282.8 L545.4 282.7 L546.4 282.5 L547.4 282.4 L548.4 282.2 L549.5 282.0 L550.5 281.7 L551.4 281.5 L552.4 281.2 L553.4 280.9 L554.4 280.5 L555.3 280.2 L556.2 279.8 L557.2 279.3 L558.1 278.9 L559.0 278.4 L559.8 277.9 L560.7 277.4 L561.5 276.8 L562.4 276.3 L563.2 275.7 L564.0 275.0 L564.7 274.4 L565.5 273.7 L566.2 273.0 L566.9 272.3 L567.0 272.2"/>
</g>
</g>
<path d="M265.31 118.60 v3.2 M265.31 380.00 v-3.2 M306.57 118.60 v3.2 M306.57 380.00 v-3.2 M347.83 118.60 v3.2 M347.83 380.00 v-3.2 M389.09 118.60 v3.2 M389.09 380.00 v-3.2 M430.35 118.60 v3.2 M430.35 380.00 v-3.2 M471.61 118.60 v3.2 M471.61 380.00 v-3.2 M512.87 118.60 v3.2 M512.87 380.00 v-3.2 M554.13 118.60 v3.2 M554.13 380.00 v-3.2 M224.05 347.32 h3.2 M595.39 347.32 h-3.2 M224.05 314.65 h3.2 M595.39 314.65 h-3.2 M224.05 281.98 h3.2 M595.39 281.98 h-3.2 M224.05 249.30 h3.2 M595.39 249.30 h-3.2 M224.05 216.62 h3.2 M595.39 216.62 h-3.2 M224.05 183.95 h3.2 M595.39 183.95 h-3.2 M224.05 151.27 h3.2 M595.39 151.27 h-3.2" stroke="#b0b0b0" stroke-width="1.1" fill="none"/>
<rect x="224.05" y="118.6" width="371.34" height="261.40" fill="none" stroke="#b0b0b0" stroke-width="1.2"/>
<path d="M461.6 247.5 L465.2 251.1 M461.6 251.1 L465.2 247.5 M374.2 224.8 L377.8 228.4 M374.2 228.4 L377.8 224.8 M374.2 270.2 L377.8 273.8 M374.2 273.8 L377.8 270.2 M400.4 178.0 L404.0 181.6 M400.4 181.6 L404.0 178.0 M400.4 317.0 L404.0 320.6 M400.4 320.6 L404.0 317.0" stroke="#4040ff" stroke-width="0.9" fill="none"/>
<g fill="none" stroke="#5050ff" stroke-width="0.9"><circle cx="541.1" cy="179.8" r="2.2"/>
<circle cx="541.1" cy="318.8" r="2.2"/>
<circle cx="567.2" cy="226.6" r="2.2"/>
<circle cx="567.2" cy="272.0" r="2.2"/></g>
<g fill="#ff00cc"><rect x="266.81" y="247.50" width="3.6" height="3.6"/>
<rect x="413.58" y="158.91" width="3.6" height="3.6"/>
<rect x="413.58" y="336.09" width="3.6" height="3.6"/>
<rect x="454.21" y="231.54" width="3.6" height="3.6"/>
<rect x="454.21" y="263.46" width="3.6" height="3.6"/></g>
</svg>
<svg class="abs" style="left:0;top:0" width="641" height="428"><text transform="translate(205.2 250.2) rotate(-90)" x="0" y="0" text-anchor="middle" font-family="Liberation Sans" font-size="7.7" fill="#4d4d4d" textLength="35" lengthAdjust="spacingAndGlyphs">Imag Axis</text></svg>
<svg class="abs" style="left:0;top:0" width="641" height="428"><defs><clipPath id="clipn2y"><rect x="0" y="320" width="160" height="11.8"/></clipPath></defs><text x="16.40" y="10.90" font-family="Liberation Sans" font-size="7.41" fill="#5c5c5c" textLength="69.25" lengthAdjust="spacingAndGlyphs" xml:space="preserve">Control System Designer</text>
<text x="4.80" y="27.00" font-family="Liberation Sans" font-size="6.72" fill="#333" textLength="48.88" lengthAdjust="spacingAndGlyphs" xml:space="preserve">CONTROL SYSTEM</text>
<text x="62.50" y="27.00" font-family="Liberation Sans" font-size="6.72" fill="#ffffff" textLength="56.38" lengthAdjust="spacingAndGlyphs" xml:space="preserve">ROOT LOCUS EDITOR</text>
<text x="8.00" y="61.00" font-family="Liberation Sans" font-size="7.13" fill="#444444" textLength="15.37" lengthAdjust="spacingAndGlyphs" xml:space="preserve">Open</text>
<text x="4.70" y="69.40" font-family="Liberation Sans" font-size="7.13" fill="#444444" textLength="21.47" lengthAdjust="spacingAndGlyphs" xml:space="preserve">Session</text>
<text x="36.50" y="61.00" font-family="Liberation Sans" font-size="7.13" fill="#444444" textLength="13.57" lengthAdjust="spacingAndGlyphs" xml:space="preserve">Save</text>
<text x="32.60" y="69.40" font-family="Liberation Sans" font-size="7.13" fill="#444444" textLength="21.47" lengthAdjust="spacingAndGlyphs" xml:space="preserve">Session</text>
<text x="24.50" y="80.10" font-family="Liberation Sans" font-size="6.04" fill="#7c7c7c" textLength="10.11" lengthAdjust="spacingAndGlyphs" xml:space="preserve">FILE</text>
<text x="79.60" y="61.00" font-family="Liberation Sans" font-size="7.13" fill="#444444" textLength="9.48" lengthAdjust="spacingAndGlyphs" xml:space="preserve">Edit</text>
<text x="63.20" y="69.40" font-family="Liberation Sans" font-size="7.13" fill="#444444" textLength="35.76" lengthAdjust="spacingAndGlyphs" xml:space="preserve">Architecture</text>
<text x="114.80" y="61.00" font-family="Liberation Sans" font-size="7.13" fill="#b4b4b4" textLength="32.41" lengthAdjust="spacingAndGlyphs" xml:space="preserve">Multimodel</text>
<text x="111.60" y="69.40" font-family="Liberation Sans" font-size="7.13" fill="#b4b4b4" textLength="39.37" lengthAdjust="spacingAndGlyphs" xml:space="preserve">Configuration</text>
<text x="87.00" y="80.10" font-family="Liberation Sans" font-size="6.04" fill="#7c7c7c" textLength="40.01" lengthAdjust="spacingAndGlyphs" xml:space="preserve">ARCHITECTURE</text>
<text x="173.00" y="61.00" font-family="Liberation Sans" font-size="7.13" fill="#444444" textLength="18.97" lengthAdjust="spacingAndGlyphs" xml:space="preserve">Tuning</text>
<text x="166.80" y="69.40" font-family="Liberation Sans" font-size="7.13" fill="#444444" textLength="26.28" lengthAdjust="spacingAndGlyphs" xml:space="preserve">Methods</text>
<text x="157.80" y="80.10" font-family="Liberation Sans" font-size="6.04" fill="#7c7c7c" textLength="49.91" lengthAdjust="spacingAndGlyphs" xml:space="preserve">TUNING METHODS</text>
<text x="217.90" y="61.00" font-family="Liberation Sans" font-size="7.13" fill="#444444" textLength="12.17" lengthAdjust="spacingAndGlyphs" xml:space="preserve">New</text>
<text x="215.50" y="69.40" font-family="Liberation Sans" font-size="7.13" fill="#444444" textLength="12.48" lengthAdjust="spacingAndGlyphs" xml:space="preserve">Plot</text>
<text x="212.40" y="80.10" font-family="Liberation Sans" font-size="6.04" fill="#7c7c7c" textLength="25.01" lengthAdjust="spacingAndGlyphs" xml:space="preserve">ANALYSIS</text>
<text x="244.00" y="61.00" font-family="Liberation Sans" font-size="7.13" fill="#444444" textLength="15.17" lengthAdjust="spacingAndGlyphs" xml:space="preserve">Store</text>
<text x="265.40" y="61.00" font-family="Liberation Sans" font-size="7.13" fill="#b4b4b4" textLength="23.37" lengthAdjust="spacingAndGlyphs" xml:space="preserve">Retrieve</text>
<text x="295.00" y="61.00" font-family="Liberation Sans" font-size="7.13" fill="#b4b4b4" textLength="26.57" lengthAdjust="spacingAndGlyphs" xml:space="preserve">Compare</text>
<text x="271.70" y="80.10" font-family="Liberation Sans" font-size="6.04" fill="#7c7c7c" textLength="23.31" lengthAdjust="spacingAndGlyphs" xml:space="preserve">DESIGNS</text>
<text x="331.20" y="61.00" font-family="Liberation Sans" font-size="7.13" fill="#444444" textLength="18.38" lengthAdjust="spacingAndGlyphs" xml:space="preserve">Export</text>
<text x="329.70" y="80.10" font-family="Liberation Sans" font-size="6.04" fill="#7c7c7c" textLength="22.31" lengthAdjust="spacingAndGlyphs" xml:space="preserve">RESULTS</text>
<text x="359.00" y="61.00" font-family="Liberation Sans" font-size="7.13" fill="#444444" textLength="32.63" lengthAdjust="spacingAndGlyphs" xml:space="preserve">Preferences</text>
<text x="357.40" y="80.10" font-family="Liberation Sans" font-size="6.04" fill="#7c7c7c" textLength="36.61" lengthAdjust="spacingAndGlyphs" xml:space="preserve">PREFERENCES</text>
<text x="14.00" y="91.20" font-family="Liberation Sans" font-size="7.54" fill="#3c3c3c" textLength="88.78" lengthAdjust="spacingAndGlyphs" xml:space="preserve">Controllers and Fixed Blocks</text>
<text x="14.00" y="174.60" font-family="Liberation Sans" font-size="7.54" fill="#3c3c3c" textLength="24.39" lengthAdjust="spacingAndGlyphs" xml:space="preserve">Designs</text>
<text x="13.50" y="258.00" font-family="Liberation Sans" font-size="7.54" fill="#3c3c3c" textLength="34.88" lengthAdjust="spacingAndGlyphs" xml:space="preserve">Responses</text>
<text x="13.50" y="341.30" font-family="Liberation Sans" font-size="7.54" fill="#3c3c3c" textLength="24.00" lengthAdjust="spacingAndGlyphs" xml:space="preserve">Preview</text>
<text x="3.10" y="103.20" font-family="Liberation Sans" font-size="6.86" fill="#262626" xml:space="preserve">F</text>
<text x="3.10" y="116.00" font-family="Liberation Sans" font-size="6.86" fill="#262626" xml:space="preserve">C</text>
<text x="3.10" y="128.50" font-family="Liberation Sans" font-size="6.86" fill="#262626" xml:space="preserve">G</text>
<text x="3.10" y="140.60" font-family="Liberation Sans" font-size="6.86" fill="#262626" xml:space="preserve">H</text>
<text x="2.80" y="270.00" font-family="Liberation Sans" font-size="7.00" fill="#262626" textLength="46.19" lengthAdjust="spacingAndGlyphs" xml:space="preserve">LoopTransfer_C</text>
<text x="2.80" y="282.55" font-family="Liberation Sans" font-size="7.00" fill="#262626" textLength="42.97" lengthAdjust="spacingAndGlyphs" xml:space="preserve">IOTransfer_r2y</text>
<text x="2.80" y="295.10" font-family="Liberation Sans" font-size="7.00" fill="#262626" textLength="43.33" lengthAdjust="spacingAndGlyphs" xml:space="preserve">IOTransfer_r2u</text>
<text x="2.80" y="307.65" font-family="Liberation Sans" font-size="7.00" fill="#262626" textLength="47.98" lengthAdjust="spacingAndGlyphs" xml:space="preserve">IOTransfer_du2y</text>
<text x="2.80" y="320.20" font-family="Liberation Sans" font-size="7.00" fill="#262626" textLength="47.61" lengthAdjust="spacingAndGlyphs" xml:space="preserve">IOTransfer_dy2y</text>
<text x="2.80" y="332.75" font-family="Liberation Sans" font-size="7.00" fill="#262626" textLength="44.40" lengthAdjust="spacingAndGlyphs" style="clip-path:url(#clipn2y)" xml:space="preserve">IOTransfer_n2y</text>
<text x="3.40" y="352.00" font-family="Liberation Mono" font-size="6.50" fill="#5a5a5a" xml:space="preserve">Open-Loop Transfer Function</text>
<text x="3.40" y="359.00" font-family="Liberation Mono" font-size="6.50" fill="#5a5a5a" xml:space="preserve">Name: LoopTransfer_C</text>
<text x="3.40" y="366.70" font-family="Liberation Mono" font-size="6.50" fill="#5a5a5a" xml:space="preserve">Locations:</text>
<text x="15.00" y="373.70" font-family="Liberation Mono" font-size="6.50" fill="#5a5a5a" xml:space="preserve">uC</text>
<text x="171.40" y="91.70" font-family="Liberation Sans" font-size="7.27" fill="#555" textLength="91.12" lengthAdjust="spacingAndGlyphs" xml:space="preserve">Bode Editor for LoopTransfer_C</text>
<text x="280.60" y="91.70" font-family="Liberation Sans" font-size="7.27" fill="#262626" textLength="109.82" lengthAdjust="spacingAndGlyphs" xml:space="preserve">Root Locus Editor for LoopTransfer_C</text>
<text x="407.60" y="91.70" font-family="Liberation Sans" font-size="7.27" fill="#555" textLength="70.52" lengthAdjust="spacingAndGlyphs" xml:space="preserve">LoopTransfer_C: nyquist</text>
<text x="493.80" y="91.70" font-family="Liberation Sans" font-size="7.27" fill="#555" textLength="58.74" lengthAdjust="spacingAndGlyphs" xml:space="preserve">IOTransfer_r2y: step</text>
<text x="338.00" y="115.60" font-family="Liberation Sans" font-size="8.23" fill="#333" font-weight="700" textLength="143.94" lengthAdjust="spacingAndGlyphs" xml:space="preserve">Root Locus Editor for LoopTransfer_C</text>
<text x="393.50" y="400.30" font-family="Liberation Sans" font-size="7.68" fill="#4d4d4d" xml:space="preserve">Real Axis</text>
<text x="219.20" y="391.00" font-family="Liberation Sans" font-size="7.54" fill="#4d4d4d" xml:space="preserve">-30</text>
<text x="260.46" y="391.00" font-family="Liberation Sans" font-size="7.54" fill="#4d4d4d" xml:space="preserve">-25</text>
<text x="301.72" y="391.00" font-family="Liberation Sans" font-size="7.54" fill="#4d4d4d" xml:space="preserve">-20</text>
<text x="342.98" y="391.00" font-family="Liberation Sans" font-size="7.54" fill="#4d4d4d" xml:space="preserve">-15</text>
<text x="384.24" y="391.00" font-family="Liberation Sans" font-size="7.54" fill="#4d4d4d" xml:space="preserve">-10</text>
<text x="427.60" y="391.00" font-family="Liberation Sans" font-size="7.54" fill="#4d4d4d" xml:space="preserve">-5</text>
<text x="469.61" y="391.00" font-family="Liberation Sans" font-size="7.54" fill="#4d4d4d" xml:space="preserve">0</text>
<text x="510.87" y="391.00" font-family="Liberation Sans" font-size="7.54" fill="#4d4d4d" xml:space="preserve">5</text>
<text x="550.04" y="391.00" font-family="Liberation Sans" font-size="7.54" fill="#4d4d4d" xml:space="preserve">10</text>
<text x="591.30" y="391.00" font-family="Liberation Sans" font-size="7.54" fill="#4d4d4d" xml:space="preserve">15</text>
<text x="210.10" y="382.70" font-family="Liberation Sans" font-size="7.54" fill="#4d4d4d" xml:space="preserve">-20</text>
<text x="210.10" y="350.02" font-family="Liberation Sans" font-size="7.54" fill="#4d4d4d" xml:space="preserve">-15</text>
<text x="210.10" y="317.35" font-family="Liberation Sans" font-size="7.54" fill="#4d4d4d" xml:space="preserve">-10</text>
<text x="214.29" y="284.68" font-family="Liberation Sans" font-size="7.54" fill="#4d4d4d" xml:space="preserve">-5</text>
<text x="216.80" y="252.00" font-family="Liberation Sans" font-size="7.54" fill="#4d4d4d" xml:space="preserve">0</text>
<text x="216.80" y="219.32" font-family="Liberation Sans" font-size="7.54" fill="#4d4d4d" xml:space="preserve">5</text>
<text x="212.61" y="186.65" font-family="Liberation Sans" font-size="7.54" fill="#4d4d4d" xml:space="preserve">10</text>
<text x="212.61" y="153.97" font-family="Liberation Sans" font-size="7.54" fill="#4d4d4d" xml:space="preserve">15</text>
<text x="212.61" y="121.30" font-family="Liberation Sans" font-size="7.54" fill="#4d4d4d" xml:space="preserve">20</text></svg>
</body></html>
